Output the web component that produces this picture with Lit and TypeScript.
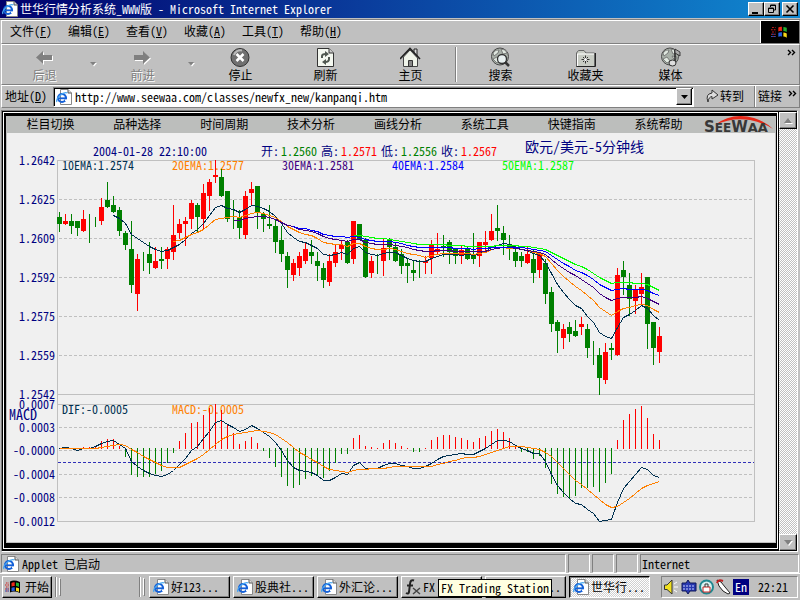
import { LitElement, html, svg, css, nothing } from "lit";
import { customElement } from "lit/decorators.js";

/* ---------- market data, in chart coordinates ---------- */

// colour, high, low, body top, body bottom (no body values = a plain wick)
const CANDLES = `
g212-232,217-224 r214-225,221-224 g214-234,221-226 g221-236,221-228 r210-232,219-231 g214-243 g217-227
r198-225,207-221 g182-208,200-207 g196-213,205-212 g207-236,210-231 g231-250,233-245 g221-293,249-285
r254-311,259-294 g252-271 g242-274,254-263 r247-269,261-268 g247-269,259-261 r247-269,249-259
r205-260,235-252 r219-239,224-233 r217-246,221-224 r200-229,203-219 g203-233,205-217 r184-229,193-219
r179-211,182-196 r160-183,175-177 g169-197,177-196 g191-222,191-219 g200-229 g210-239,217-228
r191-239,196-235 r182-205,189-193 g186-229,186-212 g212-232,214-219 g205-229,224-226 g220-253,226-242
g226-262,240-254 g252-288,256-270 r259-281,263-275 r252-276,256-268 r243-264,249-261 g240-264,252-256
g252-281,261-266 g263-288,268-280 r254-286,261-282 r245-267,252-263 r240-260,245-249 g240-264,242-263
r221-264,221-259 g224-240,224-240 g238-278,240-277 r256-278,261-273 g254-274 r239-276,248-261
g238-260,240-247 g243-262,247-261 g249-274,254-266 g259-283,263-266 g260-281,270-273 g260-278
r256-274,261-263 r240-274,245-258 r233-255,249-252 g235-257,246-248 g240-264,242-252 g248-264,249-256
r245-264,250-256 g247-260,249-259 g233-264,255-259 r242-267,242-256 r231-252,242-245 r214-241,231-240
g205-241,228-231 g226-255,233-240 g235-260,244-249 g246-267,252-261 g252-267,256-261 r246-264,254-263
g250-283,259-273 r252-278,253-270 g259-304,263-294 g287-332,292-324 g320-353,322-331 r324-349,329-338
g322-342,327-334 g320-337,331-336 r317-335,324-327 g324-358,329-348 g341-365 g348-395,355-378
r343-384,352-380 g343-360,348-350 r268-356,275-355 g261-295,270-277 g273-316,285-299 r285-314,290-301
r273-305,287-294 g277-349,277-324 g322-365,322-348 r327-363,336-352`
  .trim()
  .split(/\s+/)
  .map((s) => {
    const n = s.slice(1).split(/[-,]/).map(Number);
    return { up: s[0] === "r", high: n[0], low: n[1], top: n[2], bottom: n[3] };
  });

interface Series {
  start: number;
  color: string;
  y: number[];
}

const AVERAGES: Series[] = [
  {
    start: 9,
    color: "#003050",
    y: [215, 218, 223, 234, 238, 242, 246, 249, 251, 250, 247, 244, 239, 233, 229, 223, 215, 207, 205, 208, 209, 212,
      209, 205, 206, 208, 211, 216, 223, 232, 237, 241, 242, 245, 248, 254, 255, 254, 252, 254, 248, 246, 252, 254,
      255, 253, 252, 252, 255, 258, 260, 261, 261, 258, 256, 254, 254, 254, 255, 254, 255, 253, 251, 247, 245, 243,
      244, 247, 249, 250, 253, 255, 262, 273, 284, 292, 299, 305, 308, 316, 322, 332, 336, 338, 327, 317, 314, 310,
      305, 308, 315, 320],
  },
  {
    start: 19,
    color: "#ff8000",
    y: [241, 240, 237, 234, 232, 229, 224, 219, 218, 217, 216, 217, 215, 213, 212, 213, 215, 217, 221, 226, 229, 232,
      234, 235, 238, 242, 243, 244, 244, 246, 243, 243, 246, 248, 249, 249, 248, 249, 251, 253, 254, 255, 257, 255,
      254, 253, 253, 253, 253, 253, 254, 253, 252, 249, 248, 247, 248, 248, 249, 250, 252, 253, 256, 263, 270, 276,
      281, 286, 290, 295, 300, 307, 311, 315, 311, 308, 307, 305, 304, 305, 309, 312],
  },
  {
    start: 29,
    color: "#400080",
    y: [220, 220, 218, 217, 216, 216, 217, 219, 222, 225, 226, 229, 230, 231, 233, 236, 238, 239, 240, 241, 239, 239,
      242, 243, 244, 244, 244, 245, 246, 247, 249, 250, 251, 251, 250, 250, 250, 251, 251, 251, 251, 251, 251, 249,
      248, 247, 247, 248, 249, 250, 251, 252, 254, 259, 264, 268, 272, 275, 279, 283, 287, 293, 297, 300, 298, 297,
      297, 297, 296, 298, 301, 304],
  },
  {
    start: 39,
    color: "#0000ff",
    y: [226, 228, 228, 230, 231, 234, 235, 236, 236, 237, 236, 237, 239, 240, 241, 241, 241, 242, 243, 245, 246, 247,
      247, 247, 247, 247, 247, 248, 248, 248, 249, 248, 248, 247, 247, 247, 247, 247, 247, 248, 249, 250, 251, 255,
      259, 263, 266, 270, 272, 275, 279, 284, 287, 290, 289, 288, 289, 289, 289, 290, 293, 295],
  },
  {
    start: 49,
    color: "#00ff00",
    y: [235, 235, 236, 237, 238, 238, 239, 240, 241, 242, 243, 244, 244, 244, 244, 244, 245, 245, 245, 246, 246, 246,
      246, 246, 245, 245, 245, 245, 246, 246, 247, 248, 249, 252, 255, 258, 261, 264, 266, 269, 273, 277, 280, 283,
      282, 282, 282, 283, 283, 284, 287, 290],
  },
];

const MACD_LINES: Series[] = [
  {
    start: 0,
    color: "#003050",
    y: [448, 447, 448, 450, 448, 448, 446, 443, 441, 440, 444, 448, 461, 466, 470, 473, 475, 476, 474, 470, 464, 458,
      450, 446, 438, 431, 422, 420, 424, 427, 431, 429, 425, 428, 432, 436, 442, 450, 460, 467, 470, 471, 472, 475,
      480, 480, 477, 473, 474, 465, 462, 468, 468, 468, 465, 463, 463, 465, 466, 468, 468, 466, 463, 459, 456, 455,
      454, 453, 454, 454, 451, 448, 444, 440, 440, 441, 445, 448, 450, 453, 453, 461, 474, 485, 492, 498, 503, 504,
      509, 513, 521, 520, 519, 502, 488, 481, 474, 467, 469, 475, 477],
  },
  {
    start: 0,
    color: "#ff8000",
    y: [448, 448, 448, 448, 448, 448, 448, 447, 446, 445, 444, 445, 449, 452, 456, 459, 462, 465, 467, 467, 467, 464,
      461, 458, 454, 449, 444, 439, 436, 434, 433, 432, 431, 430, 431, 432, 434, 438, 442, 447, 452, 455, 459, 462,
      466, 469, 470, 471, 472, 470, 469, 469, 468, 468, 468, 467, 466, 466, 466, 466, 466, 466, 466, 464, 463, 461,
      460, 458, 457, 457, 456, 454, 452, 450, 448, 446, 446, 446, 447, 448, 449, 452, 456, 462, 468, 474, 480, 484,
      489, 494, 499, 504, 507, 506, 502, 498, 493, 488, 485, 483, 481],
  },
];

// end of each histogram bar; 448 marks the zero line
const HISTOGRAM = [448, 448, 448, 448, 447, 447, 446, 441, 439, 439, 446, 457, 475, 477, 477, 477, 474, 471, 463, 453,
  441, 433, 423, 422, 415, 408, 404, 410, 424, 433, 444, 441, 437, 443, 451, 458, 467, 477, 486, 488, 485, 479, 476,
  476, 478, 471, 463, 454, 454, 438, 435, 446, 447, 448, 443, 440, 443, 446, 448, 452, 452, 448, 440, 437, 435, 435,
  437, 438, 440, 442, 438, 436, 431, 429, 432, 438, 446, 452, 452, 459, 456, 468, 484, 494, 497, 498, 496, 488, 488,
  487, 492, 483, 474, 440, 420, 414, 409, 406, 418, 434, 440];

const LEFT = 59;
const STEP = 6;
const xOf = (i: number) => LEFT + STEP * i;

const PRICE_AXIS: [string, number][] = [
  ["1.2642", 160], ["1.2625", 199], ["1.2609", 238], ["1.2592", 277], ["1.2575", 316], ["1.2559", 355], ["1.2542", 394],
];
const MACD_AXIS: [string, number][] = [
  ["0.0007", 404], ["0.0003", 427], ["-0.0000", 450], ["-0.0004", 474], ["-0.0008", 497], ["-0.0012", 521],
];

/* ---------- shared text style ---------- */

const base = css`
  * { box-sizing: border-box; }
  button, input, a {
    font: inherit;
    font-feature-settings: "hwid";
    color: inherit;
    background: none;
    border: 0;
    padding: 0;
    margin: 0;
    text-decoration: none;
    white-space: nowrap;
  }
  svg { display: block; flex: none; }
`;

/* ---------- chart ---------- */

@customElement("price-chart")
export class PriceChart extends LitElement {
  static styles = [
    base,
    css`
      :host { display: block; min-height: 0; overflow: hidden; }
      .chart { width: 100%; height: 100%; }
      text { font-size: 12px; fill: #000080; white-space: pre; }
      .title, .macd { font-size: 14px; }
      .end { text-anchor: end; }
      .frame { fill: none; stroke: #c0c0c0; }
      .grid { stroke: #c0c0c0; stroke-dasharray: 3 2; }
      .signal { stroke: #3030b8; stroke-dasharray: 3 2; }
      .line { fill: none; stroke-width: 1; }
      .up { fill: #f00; }
      .down { fill: #008000; }
    `,
  ];

  private quote(label: string, value: string, x: number, up: boolean) {
    return svg`<text x=${x} y="156">${label}:</text>
      <text class=${up ? "up" : "down"} x=${x + 20} y="156">${value}</text>`;
  }

  private series(s: Series) {
    const pts = s.y.map((y, i) => `${xOf(s.start + i)}.5,${y}.5`).join(" ");
    return svg`<polyline class="line" stroke=${s.color} points=${pts} />`;
  }

  private level(y: number) {
    return svg`<line class="grid" x1="59" x2="754" y1=${y + 0.5} y2=${y + 0.5} />`;
  }

  render() {
    return html`
      <svg class="chart" viewBox="7 133 768 409" preserveAspectRatio="xMinYMin meet" role="img" aria-label="欧元/美元-5分钟线">
        <g shape-rendering="crispEdges">
          <path class="frame" d="M57.5 160.5H754.5V521.5H57.5ZM57.5 394.5H754.5M57.5 404.5H754.5" />
          ${PRICE_AXIS.slice(1, -1).map(([, y]) => this.level(y))}
          ${MACD_AXIS.slice(1, -1).map(([, y]) => this.level(y))}
          <line class="signal" x1="58" x2="754" y1="462.5" y2="462.5" />
        </g>
        ${[...PRICE_AXIS, ...MACD_AXIS].map(([t, y]) => svg`<text class="end" x="55" y=${y + 5}>${t}</text>`)}
        <text class="macd" x="9" y="420">MACD</text>
        <text x="93" y="156">2004-01-28 22:10:00</text>
        ${this.quote("开", "1.2560", 261, false)}
        ${this.quote("高", "1.2571", 321, true)}
        ${this.quote("低", "1.2556", 381, false)}
        ${this.quote("收", "1.2567", 441, true)}
        <text class="title" x="525" y="152">欧元/美元-5分钟线</text>
        ${["10EMA:1.2574", "20EMA:1.2577", "30EMA:1.2581", "40EMA:1.2584", "50EMA:1.2587"].map(
          (t, i) => svg`<text x=${62 + 110 * i} y="170" style="fill:${AVERAGES[i].color}">${t}</text>`,
        )}
        ${["DIF:-0.0005", "MACD:-0.0005"].map(
          (t, i) => svg`<text x=${62 + 110 * i} y="414" style="fill:${MACD_LINES[i].color}">${t}</text>`,
        )}
        <g shape-rendering="crispEdges">
          ${CANDLES.map((c, i) => svg`<g class=${c.up ? "up" : "down"}>
            <rect x=${xOf(i)} y=${c.high} width="1" height=${c.low - c.high} />
            ${c.top ? svg`<rect x=${xOf(i) - 2} y=${c.top} width="5" height=${c.bottom - c.top} />` : nothing}
          </g>`)}
          ${HISTOGRAM.map((y, i) => {
            if (y === 448 && i < 9) return nothing;
            const up = y <= 448;
            return svg`<rect class=${up ? "up" : "down"} x=${xOf(i)} y=${up ? y : 448} width="1"
              height=${up ? 449 - y : y - 448} />`;
          })}
          ${AVERAGES.map((s) => this.series(s))}
          ${MACD_LINES.map((s) => this.series(s))}
        </g>
      </svg>
    `;
  }
}

/* ---------- icons ---------- */

const pageIcon = html`<svg width="16" height="16" viewBox="0 0 16 16">
  <path d="M4.500 .5H12L15.500 4V15.500H4.500Z" fill="#fff" stroke="#888" />
  <path d="M12 .5V4H15.500" fill="#ddd" stroke="#555" />
  <circle cx="6" cy="9" r="4" fill="none" stroke="#1460d8" stroke-width="2.200" />
  <path d="M3 9.300H10" stroke="#1460d8" stroke-width="1.800" />
  <path d="M9 10.400H12V12H9Z" fill="#fff" />
  <path d="M1 13C-1 10 7 2 11.500 4" fill="none" stroke="#48a8f0" stroke-width="1.200" />
</svg>`;

const flag = (w: number) => html`<svg width=${w} height=${w} viewBox="0 0 16 16">
  <path d="M5 2.500Q9 .5 15 3V14Q9 11.500 5 13.500Z" fill="#000" />
  <path d="M6.500 4Q8 3 9.700 3.300V7Q8 6.600 6.500 7.500Z" fill="#f02818" />
  <path d="M11 3.500Q12.500 3.600 14 4.300V8Q12.500 7.200 11 7.100Z" fill="#20b030" />
  <path d="M6.500 8.700Q8 8 9.700 8.200V12Q8 11.500 6.500 12.300Z" fill="#2860e0" />
  <path d="M11 8.500Q12.500 8.700 14 9.300V13Q12.500 12 11 12Z" fill="#f8d818" />
  <path d="M1 4H4M0 6H4M1 8H4M0 10H4M1 12H4" stroke="#d02020" stroke-dasharray="1.500 1" />
  <path d="M1 10H4M0 12H4" stroke="#2050c0" stroke-dasharray="1.500 1" />
</svg>`;

const globe = svg`
  <circle cx="10" cy="9.500" r="8.500" fill="#a8b0a8" stroke="#484848" />
  <path d="M3 6Q6 2 9 3L8 6L4 9ZM11 2Q16 2 17 6L13 7ZM3 12L7 10L10 14L7 16ZM12 9L17 10L15 14Z" fill="#e0e8e0" stroke="#686868" stroke-width=".8" />`;

const icons = {
  back: svg`<path d="M9 4V8H18V13H9V17L2 10.500Z" fill="#fff" transform="translate(1 1)" /><path d="M9 4V8H18V13H9V17L2 10.500Z" fill="#808080" />`,
  forward: svg`<path d="M11 4V8H2V13H11V17L18 10.500Z" fill="#fff" transform="translate(1 1)" /><path d="M11 4V8H2V13H11V17L18 10.500Z" fill="#808080" />`,
  stop: svg`<circle cx="10" cy="10.500" r="9" fill="#707070" stroke="#303030" /><path d="M4 8A6.500 6.500 0 0 1 12 3.500" fill="none" stroke="#bbb" stroke-width="2" /><path d="M6.500 7L13.500 14M13.500 7L6.500 14" stroke="#fff" stroke-width="2.500" />`,
  refresh: svg`<path d="M2.500 1.500H14L18.500 6V19.500H2.500Z" fill="#f4f8f0" stroke="#333" /><path d="M14 1.500V6H18.500" fill="#ccc" stroke="#333" /><path d="M7 11V9Q7 7 11 7M14 10V12Q14 15 10 15" fill="none" stroke="#505850" stroke-width="2" /><path d="M10 4L14 7L10 10ZM11 12L7 15L11 18Z" fill="#505850" />`,
  home: svg`<path d="M14 2H17V9H14Z" fill="#e0e0e0" stroke="#222" /><path d="M3.500 10L10 3L17.500 11V19.500H3.500Z" fill="#f0f4ea" stroke="#444" /><path d="M0 12L10 1.500L20 12" fill="none" stroke="#222" stroke-width="1.600" /><path d="M8.500 13.500H12.500V19.500H8.500Z" fill="#888" stroke="#333" />`,
  search: svg`${globe}<circle cx="12" cy="12" r="4.500" fill="#e8f0f0" stroke="#333" stroke-width="1.300" /><path d="M15 15L19 19" stroke="#333" stroke-width="2.500" />`,
  folder: svg`<path d="M1.500 6L3.500 3.500H9L11 6H19.500V19.500H1.500Z" fill="#c8ccc4" stroke="#666" /><path d="M2.500 19V7H19" fill="none" stroke="#fff" /><path d="M1.500 19.500H20.500V6" fill="none" stroke="#222" /><path d="M10.500 8.500V16.500M6.500 12.500H14.500M8 10L13 15M13 10L8 15" stroke="#333" /><circle cx="10.500" cy="12.500" r="1.500" fill="#fff" />`,
  media: svg`${globe}<path d="M15 3V16" stroke="#222" stroke-width="1.500" /><path d="M15 2L20 5V9L15 6Z" fill="#aaa" stroke="#222" stroke-width=".8" /><ellipse cx="12.500" cy="16" rx="3.500" ry="3" fill="#ddd" stroke="#333" />`,
};

const more = html`<svg width="9" height="7" viewBox="0 0 9 7"><path d="M1 1L3.500 3.500L1 6M5 1L7.500 3.500L5 6" fill="none" stroke="#000" stroke-width="1.400" /></svg>`;

/* ---------- application window ---------- */

@customElement("app-root")
export class AppRoot extends LitElement {
  static styles = [
    base,
    css`
      :host {
        display: flex;
        flex-direction: column;
        min-height: 100vh;
        background: #c0c0c0;
        color: #000;
        font: 12px/16px "Noto Sans CJK SC", "Liberation Sans", sans-serif;
        font-feature-settings: "hwid";
        overflow: hidden;
      }
      .raised {
        background: #c0c0c0;
        border: 1px solid;
        border-color: #fff #000 #000 #fff;
        box-shadow: inset -1px -1px #808080;
      }
      .title {
        display: flex;
        align-items: center;
        height: 18px;
        padding: 0 2px;
        gap: 2px;
        color: #fff;
        background: linear-gradient(90deg, #00006c, #0a3c9c 45%, #1088d0);
      }
      .title h1 { flex: 1; margin: 0; font-size: 12px; font-weight: 400; white-space: pre; }
      .caption { display: flex; }
      .caption button { width: 16px; height: 14px; display: grid; place-items: center; color: #000; }
      .caption button:last-child { margin-left: 2px; }
      .row {
        display: flex;
        align-items: center;
        margin-left: 1px;
        border-top: 1px solid #fff;
        border-bottom: 1px solid #808080;
        border-left: 1px solid #fff;
        border-right: 1px solid #808080;
      }
      .bands { border-top: 1px solid #808080; margin-top: 1px; }
      .menu { height: 24px; }
      .menu button { width: 58px; height: 22px; padding-bottom: 2px; }
      .throbber {
        margin-left: auto;
        width: 39px;
        height: 22px;
        background: #000;
        border-left: 1px solid #fff;
        display: grid;
        place-items: center;
      }
      .tools { height: 41px; }
      .tools .tool {
        flex: 0 1 85px;
        height: 39px;
        display: flex;
        flex-direction: column;
        align-items: center;
        padding-top: 2px;
        line-height: 14px;
      }
      .tools .off { color: #808080; text-shadow: 1px 1px #fff; }
      .drop { width: 13px; height: 39px; display: grid; place-items: center; }
      .sep { width: 2px; height: 35px; margin: 0 1px 0 2px; border-left: 1px solid #808080; border-right: 1px solid #fff; }
      .push { margin-left: auto; align-self: flex-start; padding: 4px 3px 0 0; }
      .address { height: 23px; }
      .address label { width: 51px; padding: 0 0 2px 3px; }
      .combo {
        flex: 1;
        display: flex;
        align-items: center;
        height: 20px;
        background: #fff;
        border: 1px solid;
        border-color: #808080 #fff #fff #808080;
        box-shadow: inset 1px 1px #000;
        padding: 1px 1px 1px 2px;
      }
      .combo input { flex: 1; min-width: 0; padding: 0 0 0 3px; height: 16px; outline: 0; }
      .combo button { width: 16px; height: 17px; display: grid; place-items: center; }
      .go { width: 60px; height: 21px; margin-left: 1px; padding-bottom: 1px; display: flex; align-items: center; justify-content: center; gap: 1px; border-right: 1px solid #808080; }
      .links { width: 44px; height: 21px; display: flex; align-items: center; border-left: 1px solid #fff; padding: 0 0 1px 2px; gap: 6px; }
      .links svg { margin-top: -6px; }
      .view {
        flex: 1;
        display: flex;
        margin: 2px 2px 0 1px;
        border: 1px solid;
        border-color: #808080 #fff #fff #808080;
        min-height: 0;
      }
      .page { flex: 1; display: flex; min-width: 0; background: #000; padding: 1px 1px 2px; }
      .ring { flex: 1; display: flex; min-width: 0; border: 1px solid #fff; padding: 3px 1px 5px 2px; }
      .applet {
        flex: 1;
        min-width: 0;
        display: flex;
        flex-direction: column;
        background: #f0f0f0;
        border: 1px solid #c0c0c0;
        border-top: 0;
      }
      .nav { display: grid; grid-template-columns: repeat(8, 1fr) 73px; height: 17px; background: #bcbebc; }
      .nav button { line-height: 14px; padding-bottom: 2px; }
      .nav svg { overflow: visible; }
      price-chart { flex: 1; }
      .scroll {
        width: 18px;
        display: flex;
        flex-direction: column;
        justify-content: space-between;
        background: repeating-conic-gradient(#fff 0 25%, #c0c0c0 0 50%) 0 0 / 2px 2px;
        border-top: 1px solid #000;
      }
      .scroll button { height: 17px; display: grid; place-items: center; }
      .status { display: flex; gap: 2px; height: 19px; margin: 2px 1px 0; }
      .cell {
        width: 22px;
        border: 1px solid;
        border-color: #808080 #fff #fff #808080;
        display: flex;
        align-items: center;
        gap: 3px;
        padding: 0 1px;
        white-space: pre;
      }
      .grow { flex: 1; }
      .zone { width: 159px; }
      .taskbar { display: flex; align-items: center; height: 27px; border-top: 1px solid #fff; padding: 0 2px; }
      .taskbar button, .start { height: 22px; display: flex; align-items: center; overflow: hidden; }
      .start { width: 50px; padding: 0 2px; gap: 4px; }
      .grip { width: 6px; height: 20px; border-left: 1px solid #808080; display: flex; margin-left: 3px; box-shadow: inset 1px 0 #fff; }
      .grip::after { content: ""; width: 3px; margin: 1px 0 1px 3px; border: 1px solid; border-color: #fff #808080 #808080 #fff; }
      .quick { width: 75px; }
      .tasks { flex: 1; display: flex; gap: 3px; margin-left: 4px; min-width: 0; position: relative; }
      .tasks button { flex: 0 1 81px; padding: 0 3px; gap: 2px; }
      .tasks .active {
        border-color: #000 #fff #fff #000;
        box-shadow: inset 1px 1px #808080;
        background: repeating-conic-gradient(#fff 0 25%, #d0d0d0 0 50%) 0 0 / 2px 2px;
      }
      .tip {
        position: absolute;
        left: 289px;
        top: 3px;
        height: 18px;
        line-height: 16px;
        padding: 0 2px;
        background: #ffffe1;
        border: 1px solid #000;
        white-space: pre;
      }
      .tray {
        width: 137px;
        height: 22px;
        display: flex;
        align-items: center;
        gap: 1px;
        padding: 0 1px;
        border: 1px solid;
        border-color: #808080 #fff #fff #808080;
      }
      .lang { width: 16px; height: 16px; background: #000080; color: #fff; text-align: center; line-height: 15px; }
      .tray time { margin-left: auto; padding-right: 8px; }
    `,
  ];

  private tool(label: string, icon: unknown, off = false) {
    return html`<button class="tool ${off ? "off" : ""}" ?disabled=${off}>
      <svg width="21" height="21" viewBox="0 0 21 21">${icon}</svg>${label}
    </button>`;
  }

  private drop() {
    return html`<button class="drop" aria-label="更多" disabled>
      <svg width="7" height="5"><path d="M1 1H7L4 4.500Z" fill="#fff" /><path d="M0 0H6L3 3.500Z" fill="#808080" /></svg>
    </button>`;
  }

  render() {
    const menus = [["文件", "F"], ["编辑", "E"], ["查看", "V"], ["收藏", "A"], ["工具", "T"], ["帮助", "H"]];
    const nav = ["栏目切换", "品种选择", "时间周期", "技术分析", "画线分析", "系统工具", "快键指南", "系统帮助"];
    return html`
      <header class="title">
        ${pageIcon}
        <h1>世华行情分析系统_WWW版 - Microsoft Internet Explorer</h1>
        <div class="caption">
          <button class="raised" aria-label="最小化"><svg width="10" height="10"><path d="M1 8H7V10H1Z" /></svg></button>
          <button class="raised" aria-label="还原"><svg width="10" height="10"><path d="M3.500 3V1H8.500V6H7M3 1.500H9M1.500 4H6.500V8.500H1.500ZM1 4.500H7" fill="none" stroke="#000" /></svg></button>
          <button class="raised" aria-label="关闭"><svg width="10" height="10"><path d="M1.500 1.500L8.500 8.500M8.500 1.500L1.500 8.500" stroke="#000" stroke-width="1.600" /></svg></button>
        </div>
      </header>

      <div class="bands">
        <nav class="row menu">
          ${menus.map(([t, k]) => html`<button>${t}(<u>${k}</u>)</button>`)}
          <div class="throbber">${flag(18)}</div>
        </nav>
        <div class="row tools">
          ${this.tool("后退", icons.back, true)}${this.drop()}
          ${this.tool("前进", icons.forward, true)}${this.drop()}
          ${this.tool("停止", icons.stop)}
          ${this.tool("刷新", icons.refresh)}
          ${this.tool("主页", icons.home)}
          <span class="sep"></span>
          ${this.tool("搜索", icons.search)}
          ${this.tool("收藏夹", icons.folder)}
          ${this.tool("媒体", icons.media)}
          <button class="push" aria-label="更多">${more}</button>
        </div>
        <div class="row address">
          <label for="url">地址(<u>D</u>)</label>
          <div class="combo">
            ${pageIcon}
            <input id="url" value="http://www.seewaa.com/classes/newfx_new/kanpanqi.htm" spellcheck="false" />
            <button class="raised" aria-label="展开"><svg width="7" height="4"><path d="M0 0H7L3.500 4Z" /></svg></button>
          </div>
          <button class="go">
            <svg width="14" height="14" viewBox="0 0 14 14"><path d="M3 13Q0 5 7 4V1L13 6L7 10V7.500Q3.500 8 3 13Z" fill="#ddd" stroke="#333" /></svg>转到
          </button>
          <a class="links" href="#">链接${more}</a>
        </div>
      </div>

      <main class="view">
        <div class="page">
          <div class="ring">
            <section class="applet">
              <nav class="nav">
                ${nav.map((t) => html`<button>${t}</button>`)}
                <svg width="73" height="17" viewBox="0 0 73 17" role="img" aria-label="SeeWaa">
                  <path d="M13 9Q30 -4 52 2Q64 6 71 13Q60 6 48 4Q30 1 13 9Z" fill="#e82818" />
                  <text x="2" y="16" font-family="DejaVu Sans" font-weight="700" font-size="15" fill="#383838">S<tspan font-size="12">EE</tspan>W<tspan font-size="13">AA</tspan></text>
                </svg>
              </nav>
              <price-chart></price-chart>
            </section>
          </div>
        </div>
        <div class="scroll">
          <button class="raised" aria-label="向上滚动"><svg width="9" height="6"><path d="M1 6H9L5 1Z" fill="#fff" /><path d="M0 5H8L4 0Z" fill="#808080" /></svg></button>
          <button class="raised" aria-label="向下滚动"><svg width="9" height="6"><path d="M1 1H9L5 6Z" fill="#fff" /><path d="M0 0H8L4 5Z" fill="#808080" /></svg></button>
        </div>
      </main>

      <div class="status">
        <div class="cell grow">${pageIcon}Applet 已启动</div>
        <div class="cell"></div>
        <div class="cell"></div>
        <div class="cell"></div>
        <div class="cell zone">Internet</div>
      </div>

      <footer class="taskbar">
        <button class="start raised">${flag(16)}开始</button>
        <span class="grip"></span>
        <span class="quick"></span>
        <span class="grip"></span>
        <div class="tasks">
          <button class="raised">${pageIcon}好123...</button>
          <button class="raised">${pageIcon}股典社...</button>
          <button class="raised">${pageIcon}外汇论...</button>
          <button class="raised">
            <svg width="16" height="16" viewBox="0 0 16 16"><path d="M9 1.500Q5.500 0 5 5L4 13Q3.500 15.500 1 14M2 6.500H8" fill="none" stroke="#222" stroke-width="2" /><path d="M8 9L15 15M15 9L8 15" stroke="#444" stroke-width="1.500" /></svg>FX Tra...
          </button>
          <button class="raised">${pageIcon}外汇行...</button>
          <button class="raised active">${pageIcon}世华行...</button>
          <span class="tip" role="tooltip">FX Trading Station</span>
        </div>
        <div class="tray">
          <svg width="16" height="16" viewBox="0 0 16 16"><path d="M1.500 6H4L9 1V15L4 10.500H1.500Z" fill="#f0e020" stroke="#333" /><path d="M11 5L14 3M11 8H15M11 11L14 13" stroke="#fff" /></svg>
          <svg width="17" height="16" viewBox="0 0 17 16"><path d="M2 4H6L8 1L10 4H16V12H10L8 15L6 12H2Z" fill="#2838b0" stroke="#101858" /><path d="M3 7H14M3 10H14" stroke="#c8d0ff" stroke-dasharray="2 1" /></svg>
          <svg width="17" height="16" viewBox="0 0 17 16"><circle cx="8.500" cy="8" r="6.500" fill="#d8f0f0" stroke="#208890" stroke-width="2" /><path d="M5 8H12V13H5Z" fill="#fff" stroke="#c02020" /><path d="M7 8V5H10V8" fill="none" stroke="#333" /></svg>
          <svg width="16" height="16" viewBox="0 0 16 16"><path d="M1 1L5 3L9 8L14 14L12 15L7 12L3 7Z" fill="#fff" stroke="#222" /><path d="M1 4Q2 0 7 2" fill="none" stroke="#c02020" stroke-width="2" /></svg>
          <span class="lang">En</span>
          <time>22:21</time>
        </div>
      </footer>
    `;
  }
}
